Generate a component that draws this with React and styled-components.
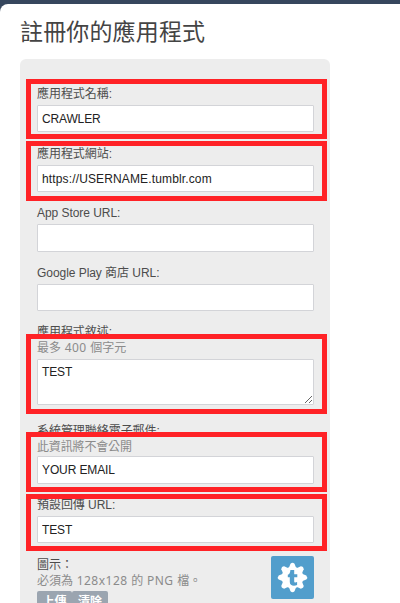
import React from "react";
import styled, { createGlobalStyle } from "styled-components";

const GlobalStyle = createGlobalStyle`
  *, *::before, *::after { box-sizing: border-box; }
  html, body { margin: 0; height: 603px; overflow: hidden; background: #36465d; }
`;

const Page = styled.main`
  height: 603px;
  padding-top: 4px;
  overflow: hidden;
  background: #36465d;
  font: 12px/16px "Liberation Sans", "Noto Sans CJK TC", sans-serif;
  color: #4c4c4c;
`;

const Sheet = styled.div`
  height: 620px;
  padding: 8px 20px 0;
  background: #fff;
  border-top-left-radius: 8px;
`;

const Title = styled.h1`
  margin: 0 0 11px;
  height: 36px;
  font: 400 23px/36px "Noto Sans CJK TC", sans-serif;
  letter-spacing: 0.15px;
  color: #444;
  white-space: nowrap;
`;

const Panel = styled.form`
  width: 310px;
  height: 580px;
  padding: 27px 16px 0 17px;
  background: #ededed;
  border-radius: 6px;
`;

const Field = styled.div`
  position: relative;
  display: flex;
  flex-direction: column;
  height: ${(p) => p.$height}px;
`;

const Label = styled.label`
  height: 16px;
  margin-bottom: ${(p) => (p.$tight ? 0 : 3)}px;
  line-height: ${(p) => (p.$tight ? 18 : 16)}px;
  letter-spacing: -0.05px;
  white-space: nowrap;
`;

const Hint = styled.div`
  height: 16px;
  margin-bottom: ${(p) => p.$gap || 0}px;
  font-family: "Noto Sans CJK TC", sans-serif;
  letter-spacing: ${(p) => p.$spacing || 0}px;
  color: #8b8b8b;
  white-space: nowrap;
`;

const Wide = styled.span`
  font-family: "Noto Sans", sans-serif;
  letter-spacing: 0.5px;
  white-space: pre;
`;

const Input = styled.input`
  display: block;
  width: 277px;
  height: ${(p) => p.$height || 27}px;
  padding: 0 4px;
  border: 1px solid #d3d4d8;
  border-radius: 1px;
  background: #fff;
  color: #222;
  font: 12px "Liberation Sans", sans-serif;
  letter-spacing: ${(p) => p.$spacing || 0}px;
  outline: none;
`;

const TextArea = styled.textarea`
  display: block;
  width: 277px;
  height: 46px;
  padding: 5px 4px;
  border: 1px solid #d3d4d8;
  border-radius: 1px;
  background: #fff;
  color: #222;
  font: 12px/14px "Liberation Sans", sans-serif;
  letter-spacing: -0.15px;
  outline: none;
  overflow: hidden;
  resize: vertical;
`;

const Highlight = styled.div`
  position: absolute;
  left: -11px;
  top: ${(p) => p.$top}px;
  width: 301px;
  height: ${(p) => p.$height}px;
  border: 5px solid #ff2226;
  pointer-events: none;
`;

const IconField = styled.div`
  display: flex;
  justify-content: space-between;
  width: 277px;
`;

const Buttons = styled.div`
  display: flex;
  margin-top: 3px;
`;

const Button = styled.button`
  height: 20px;
  width: ${(p) => p.$width}px;
  padding: 0;
  border: 0;
  border-radius: 2px;
  background: #9ba5b0;
  color: #fff;
  font: 700 12px/18px "Noto Sans CJK TC", sans-serif;
`;

const teeth = [0, 45, 90, 135, 180, 225, 270, 315];

const AppIcon = () => (
  <svg width="43" height="43" viewBox="0 0 43 43">
    <rect width="43" height="43" rx="2" fill="#529ecc" />
    <g fill="#fff">
      <circle cx="21.5" cy="21.5" r="10.8" />
      {teeth.map((a) => (
        <path key={a} d="M17.8 12 L19.5 7.7 Q21.5 5.9 23.5 7.7 L25.2 12 Z" transform={`rotate(${a} 21.5 21.5)`} />
      ))}
    </g>
    <path
      fill="#529ecc"
      d="M19.4 14h3.8v4.2h3.1v3.1h-3.1v4c0 1.5 1.2 1.5 2.9.8v3c-3.8 1.4-7.3.4-7.3-3.2v-4.6h-2v-2.5c1.6-.6 2.4-2 2.6-4.8z"
    />
  </svg>
);

export default function App() {
  return (
    <Page>
      <GlobalStyle />
      <Sheet>
        <Title>註冊你的應用程式</Title>
        <Panel>
          <Field $height={60}>
            <Label>應用程式名稱:</Label>
            <Input $spacing={-0.15} defaultValue="CRAWLER" />
            <Highlight $top={-7} $height={60} />
          </Field>
          <Field $height={59}>
            <Label>應用程式網站:</Label>
            <Input $spacing={0.14} defaultValue="https://USERNAME.tumblr.com" />
            <Highlight $top={-5} $height={60} />
          </Field>
          <Field $height={60}>
            <Label>App Store URL:</Label>
            <Input $height={28} />
          </Field>
          <Field $height={58}>
            <Label>Google Play 商店 URL:</Label>
            <Input />
          </Field>
          <Field $height={99}>
            <Label $tight>應用程式敘述:</Label>
            <Hint $gap={4}>最多<Wide> 400 </Wide>個字元</Hint>
            <TextArea defaultValue="TEST" />
            <Highlight $top={11} $height={80} />
          </Field>
          <Field $height={75}>
            <Label $tight>系統管理聯絡電子郵件:</Label>
            <Hint $gap={2} $spacing={-0.15}>此資訊將不會公開</Hint>
            <Input $height={28} $spacing={-0.12} defaultValue="YOUR EMAIL" />
            <Highlight $top={10} $height={60} />
          </Field>
          <Field $height={59}>
            <Label>預設回傳 URL:</Label>
            <Input $spacing={-0.15} defaultValue="TEST" />
            <Highlight $top={-3} $height={57} />
          </Field>
          <IconField>
            <div>
              <Label as="div" $tight>圖示：</Label>
              <Hint>必須為<Wide> 128x128 </Wide>的<Wide> PNG </Wide>檔。</Hint>
              <Buttons>
                <Button type="button" $width={35}>上傳</Button>
                <Button type="button" $width={36}>清除</Button>
              </Buttons>
            </div>
            <AppIcon />
          </IconField>
        </Panel>
      </Sheet>
    </Page>
  );
}
